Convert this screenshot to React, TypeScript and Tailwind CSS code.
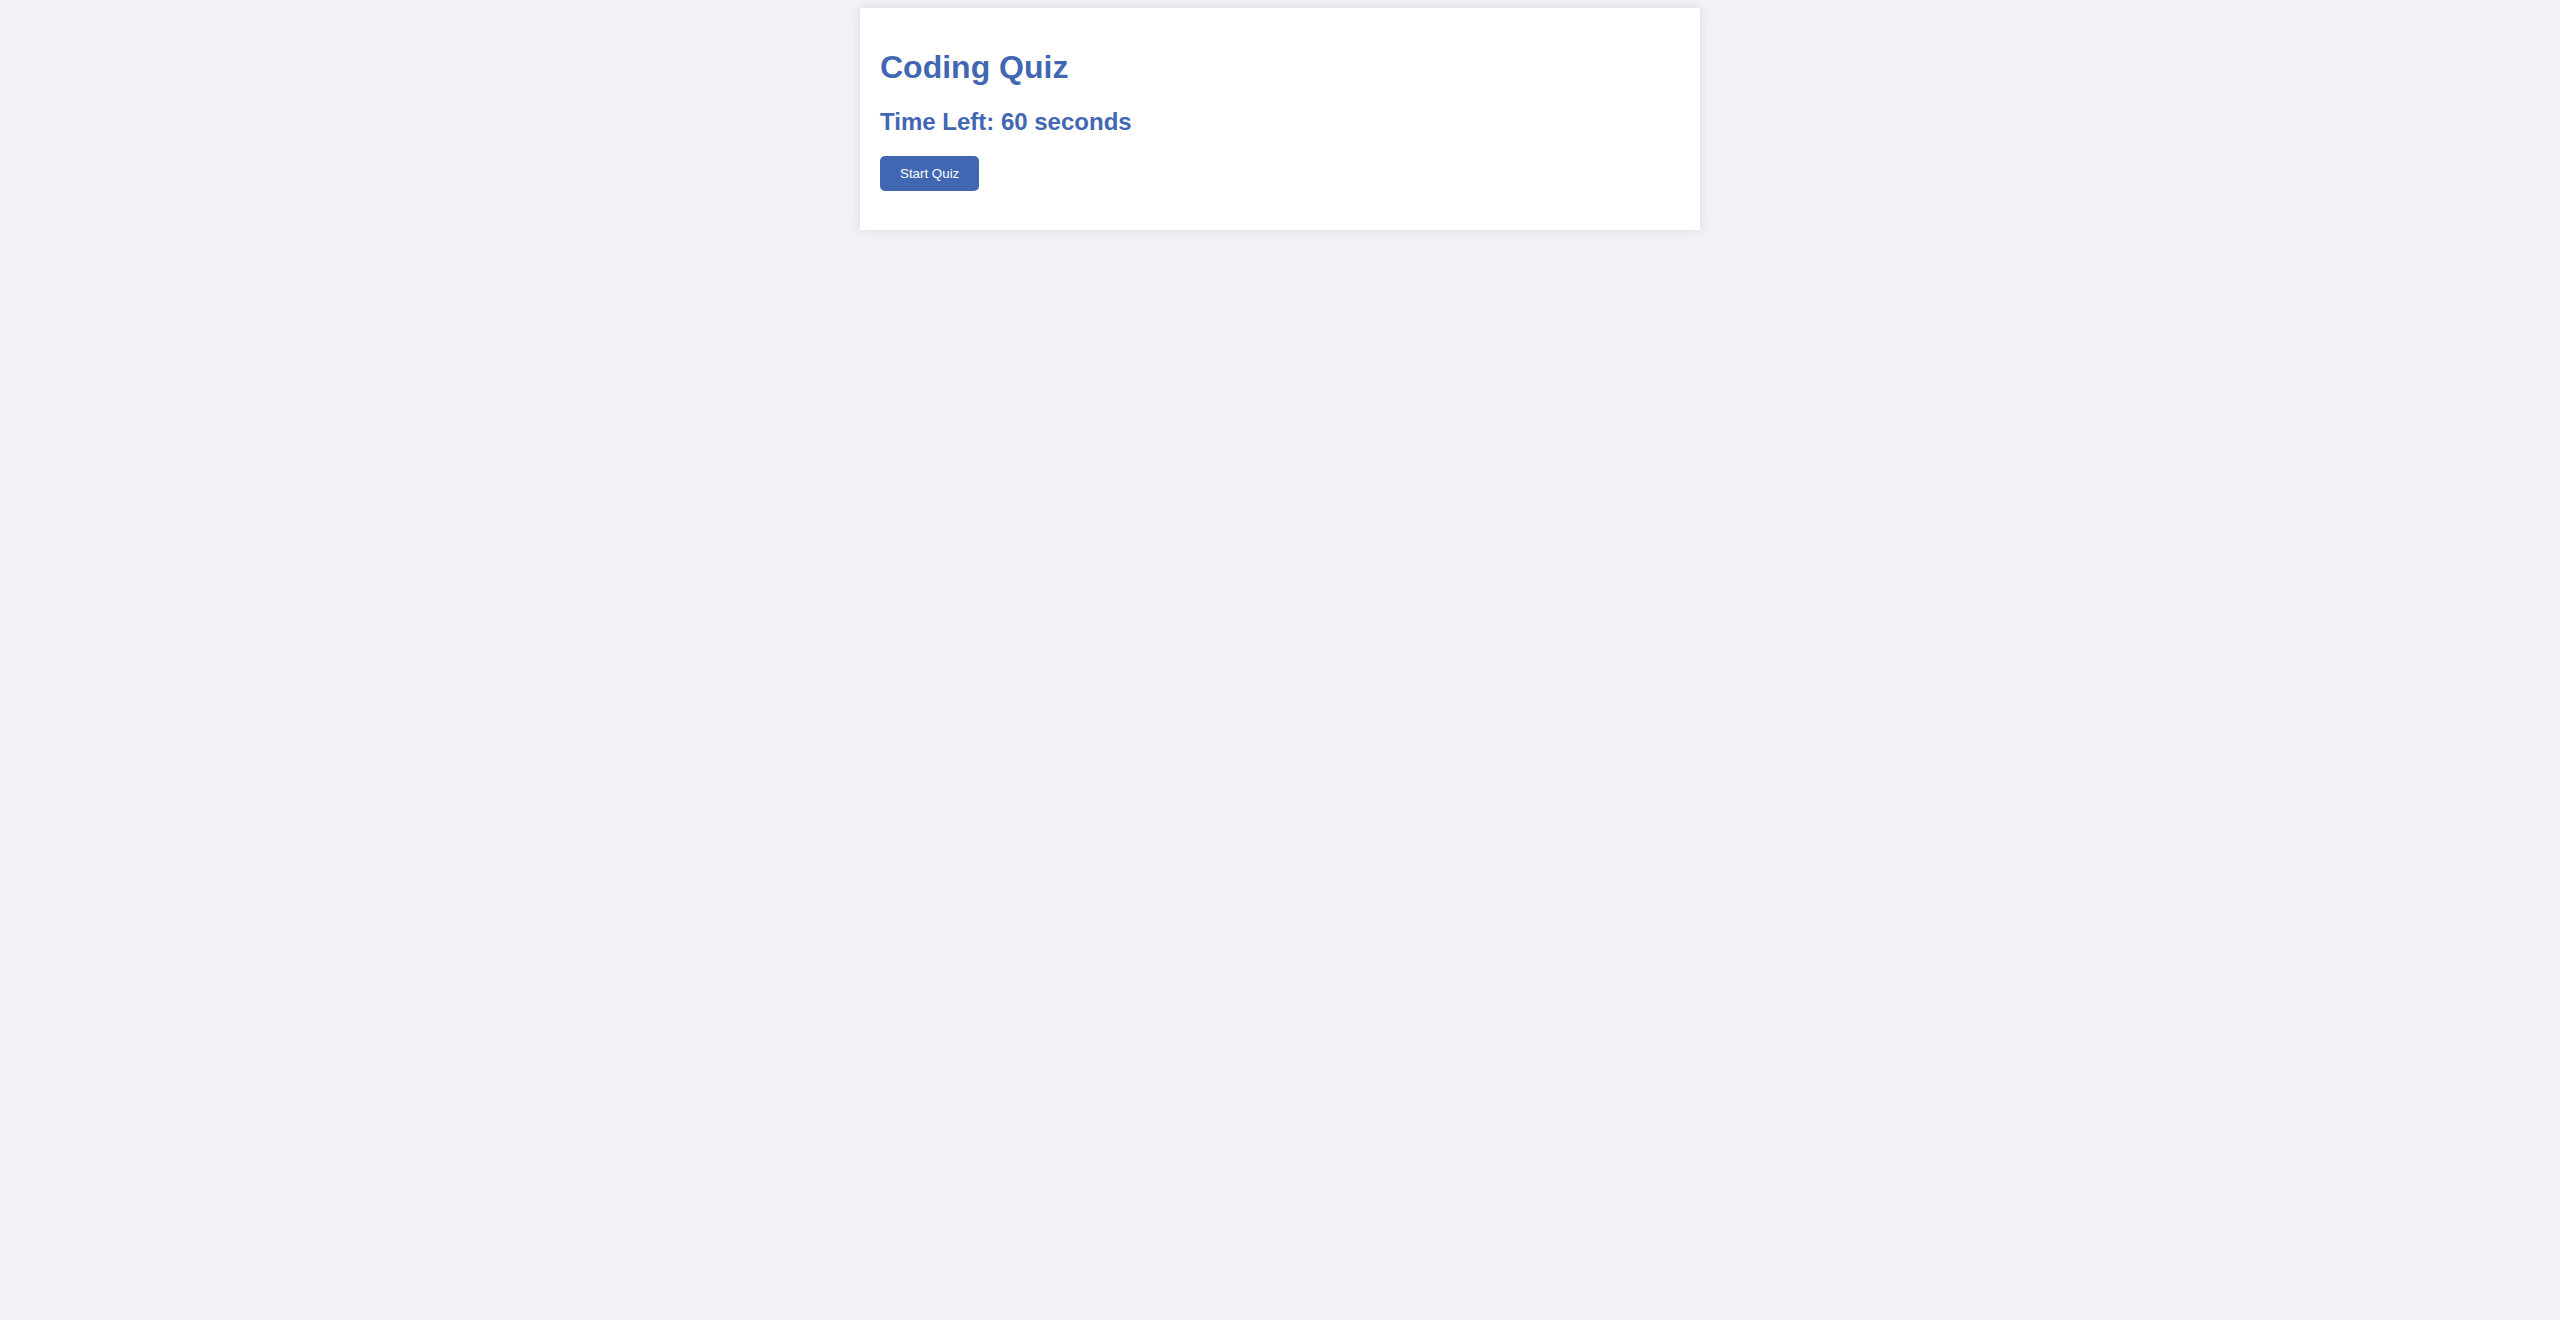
export default function App() {
  return (
    <div className="min-h-screen bg-[#f0f2f5] pt-[8px]" style={{ fontFamily: '"Liberation Sans", Arial, sans-serif' }}>
      <div className="mx-auto w-[840px] bg-white p-[20px] shadow-[0_0_10px_rgba(0,0,0,0.1)]">
        <h1 className="mt-[21.44px] mb-[21.44px] text-[32px] font-bold leading-[1.15] text-[#4267b2]">Coding Quiz</h1>
        <h2 className="mt-0 mb-[20.5px] text-[24px] font-bold leading-[1.15] text-[#4267b2]">Time Left: 60 seconds</h2>
        <button className="block rounded-[5px] bg-[#4267b2] px-[20px] py-[10px] text-[13.33px] leading-[15px] text-white">Start Quiz</button>
        <div className="h-[19.5px]" />
      </div>
    </div>
  );
}
